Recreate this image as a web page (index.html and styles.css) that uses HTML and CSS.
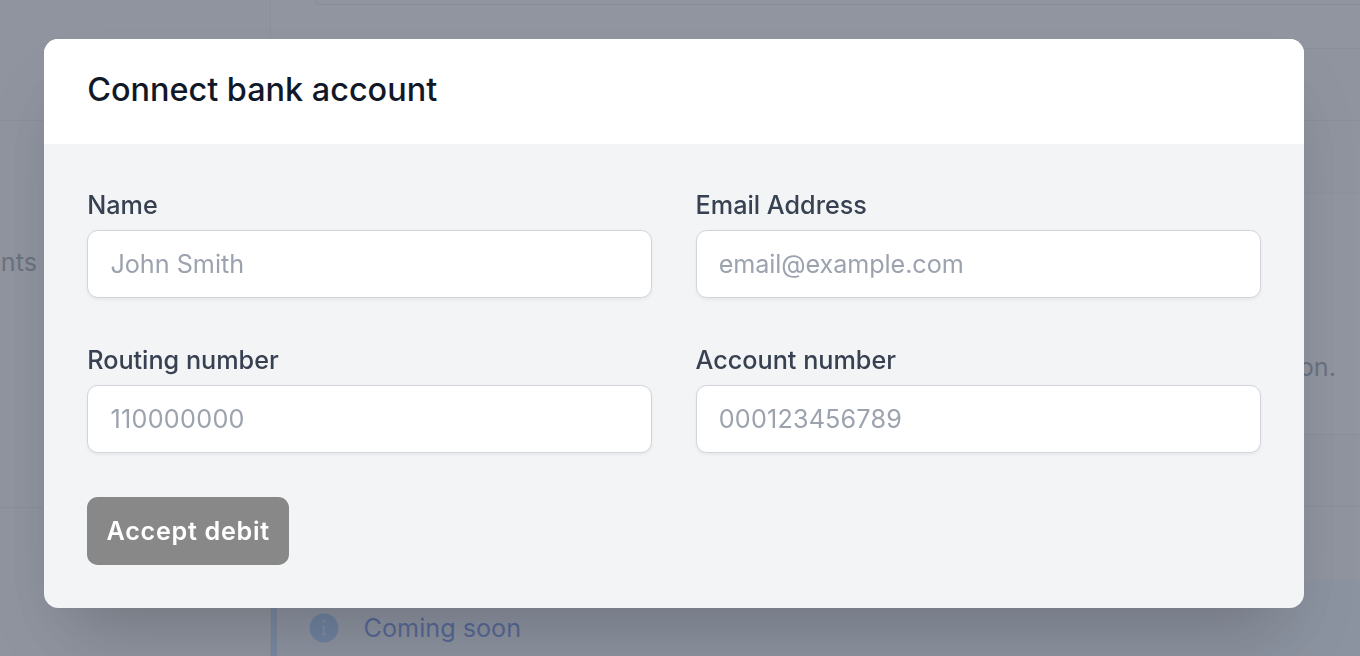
FILE: index.html
```html
<!DOCTYPE html>
<html lang="en">
<head>
<meta charset="utf-8">
<title>Connect bank account</title>
<link rel="stylesheet" href="styles.css">
</head>
<body>
<div class="page">
  <aside class="sidebar">
    <div class="side-top"></div>
    <div class="side-mid"><span class="side-link">Payments</span></div>
    <div class="side-low"></div>
  </aside>
  <main class="main">
    <div class="strip-a"><div class="top-card"></div></div>
    <div class="strip-b"></div>
    <div class="strip-c"></div>
    <div class="strip-d"><p class="desc">Add your bank account information.</p></div>
    <div class="strip-e"></div>
    <div class="strip-f"></div>
    <div class="notice">
      <svg class="notice-icon" viewBox="0 0 20 20" aria-hidden="true"><circle class="notice-disc" cx="10" cy="10" r="8"/><path class="notice-glyph" d="M10 5.2a.9.9 0 1 1 0 1.8.9.9 0 0 1 0-1.8ZM9.1 8.6h1.3v4.3h.6v1.2H9.1v-1.2h.3V9.8h-.3Z"/></svg>
      <span class="notice-text">Coming soon</span>
    </div>
  </main>
</div>
<div class="overlay"></div>
<section class="modal">
  <h2 class="modal-title">Connect bank account</h2>
  <form class="modal-body">
    <div class="fields">
      <label class="field"><span class="field-label">Name</span><input class="field-input" type="text" placeholder="John Smith"></label>
      <label class="field"><span class="field-label">Email Address</span><input class="field-input field-input-email" type="text" placeholder="email@example.com"></label>
      <label class="field"><span class="field-label">Routing number</span><input class="field-input field-input-num" type="text" placeholder="110000000"></label>
      <label class="field"><span class="field-label">Account number</span><input class="field-input field-input-num field-input-long" type="text" placeholder="000123456789"></label>
    </div>
    <button class="submit" type="button">Accept debit</button>
  </form>
</section>
</body>
</html>
```
FILE: styles.css
```css
* { box-sizing: border-box; }
html, body { margin: 0; height: 100%; overflow: hidden; }
body { font-family: Inter, "Liberation Sans", sans-serif; background: #fff; color: #111827; }

.page { display: flex; height: 656px; overflow: hidden; }
.sidebar { flex: 0 0 271px; border-right: 1px solid #e5e7eb; background: #f9fafb; }
.side-top { height: 121px; border-bottom: 1px solid #e5e7eb; }
.side-mid { height: 387px; border-bottom: 1px solid #e5e7eb; padding-top: 126px; }
.side-link { display: block; margin-left: -80px; font-size: 25.2px; line-height: 30px; color: #6b7280; }
.side-low { height: 148px; }

.main { flex: 1; min-width: 0; overflow: hidden; }
.strip-a { height: 49px; padding-left: 44px; border-bottom: 1px solid #e5e7eb; background: #fff; }
.top-card { height: 5px; margin-right: -40px; border: 1px solid #d1d5db; border-top: 0; border-radius: 0 0 11px 11px; background: #fff; }
.strip-b { height: 72px; background: #f9fafb; border-bottom: 1px solid #e5e7eb; }
.strip-c { height: 73px; background: #f9fafb; border-bottom: 1px solid #eceef1; }
.strip-d { height: 241px; padding-top: 157px; text-align: right; background: #fff; border-bottom: 1px solid #e5e7eb; overflow: hidden; }
.desc { margin: 0; padding-right: 24px; font-size: 25.2px; line-height: 32px; color: #6b7280; white-space: nowrap; }
.strip-e { height: 72px; background: #f9fafb; border-bottom: 1px solid #e5e7eb; }
.strip-f { height: 74px; background: #f9fafb; }
.notice { display: flex; align-items: flex-start; height: 75px; margin-left: -1px; padding: 29px 0 0 29px; gap: 21.6px; border-left: 7px solid #a5cdfd; background: #eff6ff; }
.notice-icon { flex: none; width: 36px; height: 36px; }
.notice-disc { fill: #7db5fd; }
.notice-glyph { fill: #c3dcfe; }
.notice-text { font-size: 25.2px; line-height: 36px; color: #1d4ed8; }

.overlay { position: fixed; inset: 0; background: rgba(107, 114, 128, .75); }

.modal {
  position: fixed;
  left: 44px;
  top: 39px;
  width: 1260px;
  height: 569px;
  border-radius: 14.4px;
  overflow: hidden;
  background: #f3f4f6;
  box-shadow: 0 40px 70px -21.6px rgba(0, 0, 0, .22);
}
.modal-title {
  margin: 0;
  height: 105px;
  padding: 26px 43.2px 0;
  background: #fff;
  font-size: 32.4px;
  line-height: 50.4px;
  font-weight: 500;
  color: #111827;
}
.modal-body { padding: 43.2px 43.2px 0; }
.fields { display: grid; grid-template-columns: 1fr 1fr; column-gap: 43.2px; row-gap: 43.6px; }
.field { display: block; }
.field-label { display: block; font-size: 25.2px; line-height: 36px; font-weight: 500; color: #374151; margin-bottom: 7.2px; }
.field-input {
  display: block;
  width: 100%;
  height: 68px;
  padding: 0 0 1px 22.2px;
  border: 1px solid #d1d5db;
  border-radius: 10.8px;
  background: #fff;
  box-shadow: 0 1.8px 3.6px rgba(0, 0, 0, .05);
  font-family: inherit;
  font-size: 25.2px;
  color: #111827;
  outline: none;
}
.field-input-email { letter-spacing: -.1px; }
.field-input-num { letter-spacing: .3px; }
.field-input-long { letter-spacing: .17px; }
.field-input::placeholder { color: #9ca3af; opacity: 1; }
.submit {
  display: block;
  margin-top: 43.6px;
  width: 202px;
  height: 68.4px;
  padding: 0;
  border: 0;
  border-radius: 10.8px;
  background: #888888;
  color: #fff;
  font-family: inherit;
  font-size: 25.2px;
  font-weight: 560;
  letter-spacing: .7px;
}
```
